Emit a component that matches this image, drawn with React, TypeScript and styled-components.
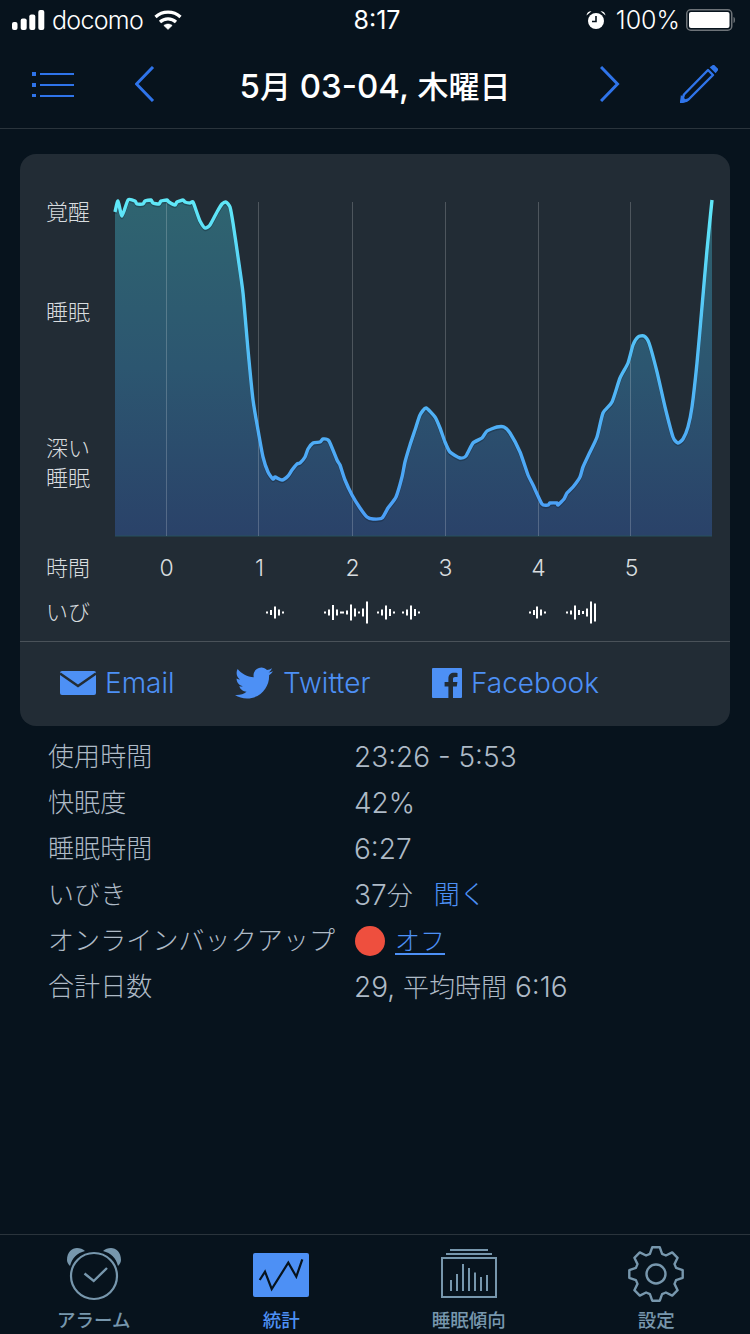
import React from "react";
import styled, { createGlobalStyle } from "styled-components";
import { FaTwitter } from "react-icons/fa";

const BLUE = "#4d90f5";
const NAV_BLUE = "#2f74ea";
const FONT = `Inter, "Noto Sans CJK JP", sans-serif`;

const GlobalStyle = createGlobalStyle`
  html, body {
    margin: 0;
    padding: 0;
    background: #07131d;
  }
  * {
    box-sizing: border-box;
  }
`;

const Page = styled.div`
  display: flex;
  flex-direction: column;
  width: 750px;
  height: 1334px;
  overflow: hidden;
  background: #07131d;
  font-family: ${FONT};
`;

/* status bar */
const StatusBar = styled.div`
  display: flex;
  align-items: center;
  height: 40px;
  padding: 0 15px 0 12px;
  color: #fff;
  font-size: 25px;
  font-weight: 300;
`;

const Carrier = styled.span`
  margin-left: 7px;
  margin-right: 11px;
  letter-spacing: -0.7px;
`;

const Clock = styled.span`
  position: absolute;
  left: 0;
  width: 754px;
  text-align: center;
  font-weight: 400;
`;

const StatusRight = styled.div`
  display: flex;
  align-items: center;
  margin-left: auto;
`;

const BatteryText = styled.span`
  margin: 0 6px 0 10px;
`;

/* header */
const Header = styled.header`
  display: flex;
  align-items: center;
  height: 89px;
  padding: 0 32px;
  border-bottom: 1px solid #2a343c;
`;

const Title = styled.h1`
  flex: 1;
  margin: 0 5px 0 0;
  text-align: center;
  color: #fff;
  font-size: 33px;
  font-weight: 450;
  white-space: nowrap;
`;

const TitleCjk = styled.span`
  font-size: 31px;
`;

const NavIcon = styled.svg<{ $left?: number; $right?: number }>`
  flex: none;
  display: block;
  margin-left: ${({ $left }) => $left ?? 0}px;
  margin-right: ${({ $right }) => $right ?? 0}px;
  color: ${NAV_BLUE};
`;

/* card */
const Card = styled.section`
  margin: 25px 20px 0;
  padding-top: 42px;
  height: 572px;
  background: #222c35;
  border-radius: 16px;
  color: #d8dcdf;
  font-size: 22px;
  font-weight: 300;
`;

const ChartRow = styled.div`
  display: flex;
  height: 346px;
`;

const YAxis = styled.div`
  flex: none;
  width: 90px;
  padding-left: 26px;
`;

const YLabel = styled.div<{ $top: number }>`
  margin-top: ${({ $top }) => $top}px;
  line-height: 30px;
`;

const ChartSvg = styled.svg`
  display: block;
  overflow: visible;
`;

const AxisRow = styled.div<{ $top: number }>`
  display: flex;
  align-items: center;
  height: 30px;
  margin-top: ${({ $top }) => $top}px;
  padding-left: 26px;
  line-height: 30px;
`;

const AxisName = styled.div<{ $width: number }>`
  flex: none;
  width: ${({ $width }) => $width}px;
`;

const Tick = styled.div`
  flex: none;
  width: 93px;
  text-align: center;
  font-size: 23px;
`;

const SnoreSvg = styled.svg`
  display: block;
  flex: none;
`;

const ShareRow = styled.div`
  display: flex;
  align-items: center;
  height: 85px;
  margin-top: 14px;
  padding: 0 0 3px 40px;
  border-top: 1px solid #4a5259;
`;

const ShareLink = styled.a<{ $width: number }>`
  display: flex;
  align-items: center;
  flex: none;
  width: ${({ $width }) => $width}px;
  color: ${BLUE};
  font-size: 28px;
  font-weight: 300;
`;

const ShareIcon = styled.svg<{ $gap: number }>`
  flex: none;
  display: block;
  margin-right: ${({ $gap }) => $gap}px;
`;

const TwitterIcon = styled(FaTwitter)`
  flex: none;
  width: 38px;
  height: 38px;
  margin-right: 10px;
`;

/* details */
const InfoList = styled.div`
  padding: 8px 0 0 48px;
  color: #aebac6;
  font-weight: 350;
`;

const InfoRow = styled.div`
  display: flex;
  align-items: center;
  height: 46px;
  line-height: 46px;
`;

const InfoLabel = styled.div`
  flex: none;
  width: 306px;
  font-size: 26px;
  font-weight: 300;
  letter-spacing: 0.1px;
  white-space: nowrap;
`;

const InfoValue = styled.div`
  display: flex;
  align-items: center;
  font-size: 28px;
  white-space: nowrap;
`;

const Cjk = styled.span`
  font-size: 26px;
  font-weight: 300;
`;

const ListenLink = styled.a`
  margin-left: 21px;
  color: ${BLUE};
  font-size: 26px;
  font-weight: 300;
`;

const OffDot = styled.span`
  width: 30px;
  height: 30px;
  margin: 0 10px 0 1px;
  border-radius: 50%;
  background: #ee4f3e;
`;

const OffLink = styled.a`
  color: ${BLUE};
  font-size: 25px;
  font-weight: 300;
  text-decoration: underline;
  text-underline-offset: 3px;
`;

/* tab bar */
const TabBar = styled.nav`
  display: grid;
  grid-template-columns: repeat(4, 1fr);
  height: 100px;
  margin-top: auto;
  border-top: 1px solid #2a343c;
`;

const Tab = styled.div<{ $active?: boolean }>`
  display: flex;
  flex-direction: column;
  align-items: center;
  color: ${({ $active }) => ($active ? BLUE : "#7797ad")};
  font-size: 18.5px;
  font-weight: 500;
`;

const TabIcon = styled.svg`
  display: block;
  margin-top: 9px;
`;

const TabLabel = styled.div`
  margin-top: 1px;
  line-height: 30px;
`;

const curve: [number, number][] = [
  [115, 212], [118, 201], [122, 216], [128, 200], [135, 201], [137, 204], [143, 204], [145, 201],
  [151, 200], [153, 203], [159, 204], [161, 201], [167, 200], [169, 202], [175, 205], [177, 202],
  [183, 200], [185, 202], [190, 203], [193, 202], [197, 213], [200, 221], [205, 228], [210, 225],
  [217, 212], [222, 204], [226, 202], [230, 207], [233, 223], [238, 257], [243, 293], [248, 350],
  [253, 400], [258, 430], [263, 457], [268, 472], [273, 479], [275, 477], [282, 480], [288, 476],
  [292, 470], [297, 464], [300, 463], [305, 457], [308, 449], [313, 443], [320, 442], [323, 439],
  [329, 441], [337, 460], [340, 465], [345, 480], [352, 495], [360, 508], [367, 517], [373, 519],
  [382, 518], [388, 508], [396, 497], [402, 477], [405, 462], [410, 445], [415, 430], [420, 415],
  [426, 408], [435, 417], [440, 428], [445, 442], [450, 452], [460, 458], [466, 456], [473, 443],
  [482, 438], [487, 431], [497, 427], [504, 427], [510, 433], [520, 452], [528, 475], [533, 485],
  [542, 504], [548, 505], [550, 503], [557, 503], [558, 505], [564, 499], [567, 493], [573, 487],
  [580, 477], [583, 467], [590, 452], [597, 437], [603, 413], [612, 402], [620, 378], [628, 363],
  [633, 345], [638, 337], [644, 336], [649, 343], [657, 372], [665, 407], [673, 437], [678, 443],
  [683, 439], [688, 427], [692, 407], [697, 363], [702, 307], [707, 250], [712, 200],
];

// catmull-rom through the sampled points, low tension so the flat top stays flat
const smooth = (pts: [number, number][]) => {
  let d = `M${pts[0][0]} ${pts[0][1]}`;
  for (let i = 0; i < pts.length - 1; i++) {
    const p0 = pts[Math.max(i - 1, 0)];
    const p1 = pts[i];
    const p2 = pts[i + 1];
    const p3 = pts[Math.min(i + 2, pts.length - 1)];
    const c1x = p1[0] + (p2[0] - p0[0]) / 10;
    const c1y = p1[1] + (p2[1] - p0[1]) / 10;
    const c2x = p2[0] - (p3[0] - p1[0]) / 10;
    const c2y = p2[1] - (p3[1] - p1[1]) / 10;
    d += `C${c1x.toFixed(1)} ${c1y.toFixed(1)} ${c2x.toFixed(1)} ${c2y.toFixed(1)} ${p2[0]} ${p2[1]}`;
  }
  return d;
};

const linePath = smooth(curve);
const gridLines = [166, 258, 352, 445, 538, 630];

// x, height of each snore bar, in page x
const snoreBars: [number, number][] = [
  [267, 2], [271, 5], [275, 12], [279, 6], [283, 2],
  [325, 2], [329, 6], [333, 15], [337, 6], [341, 2], [343, 2], [347, 4], [351, 16], [355, 8], [359, 2], [363, 8], [367, 22],
  [378, 2], [382, 6], [386, 14], [390, 7], [394, 2],
  [403, 2], [407, 6], [411, 14], [415, 7], [419, 2],
  [530, 2], [534, 5], [537, 12], [541, 6], [545, 2],
  [567, 2], [571, 4], [575, 14], [579, 5], [583, 3], [587, 8], [591, 22], [595, 18],
];

const gearPath = () => {
  const cx = 30;
  const cy = 30;
  const parts: string[] = [];
  for (let i = 0; i < 8; i++) {
    const a = -90 + i * 45;
    const pts = [
      [21, a - 17],
      [27, a - 8],
      [27, a + 8],
      [21, a + 17],
    ];
    pts.forEach(([r, deg]) => {
      const rad = (deg * Math.PI) / 180;
      parts.push(`${(cx + r * Math.cos(rad)).toFixed(1)} ${(cy + r * Math.sin(rad)).toFixed(1)}`);
    });
  }
  return `M${parts.join("L")}Z`;
};

const SleepChart = () => (
  <ChartSvg width={610} height={346} viewBox="110 196 610 346">
    <defs>
      <linearGradient id="area" gradientUnits="userSpaceOnUse" x1="0" y1="200" x2="0" y2="536">
        <stop offset="0" stopColor="#2f6470" />
        <stop offset="0.5" stopColor="#2c5670" />
        <stop offset="1" stopColor="#2a4269" />
      </linearGradient>
      <linearGradient id="stroke" gradientUnits="userSpaceOnUse" x1="0" y1="200" x2="0" y2="536">
        <stop offset="0" stopColor="#5fe8f8" />
        <stop offset="0.45" stopColor="#52bdf6" />
        <stop offset="1" stopColor="#4a9bf6" />
      </linearGradient>
    </defs>
    <path d={`${linePath}L712 536L115 536Z`} fill="url(#area)" />
    <line x1="115" y1="536" x2="712" y2="536" stroke="#26505f" />
    {gridLines.map((x) => (
      <line key={x} x1={x + 0.5} y1="202" x2={x + 0.5} y2="536" stroke="#fff" strokeOpacity="0.2" />
    ))}
    <path d={linePath} fill="none" stroke="#0d1a24" strokeOpacity="0.3" strokeWidth="3.4" transform="translate(0 1.5)" />
    <path d={linePath} fill="none" stroke="url(#stroke)" strokeWidth="3.4" strokeLinejoin="round" />
  </ChartSvg>
);

const App = () => (
  <Page>
    <GlobalStyle />
    <StatusBar>
      <svg width="33" height="20" viewBox="0 0 33 20" fill="#fff">
        <rect x="0" y="12" width="5.5" height="8" rx="2" />
        <rect x="8.7" y="8.5" width="6" height="11.5" rx="2" />
        <rect x="17.3" y="4.5" width="6" height="15.5" rx="2" />
        <rect x="26.3" y="0" width="6" height="20" rx="2" />
      </svg>
      <Carrier>docomo</Carrier>
      <svg width="28" height="20" viewBox="0 0 28 20" fill="none" stroke="#fff" strokeWidth="3.2">
        <path d="M1.5 7C8.5 0.5 19.5 0.5 26.5 7" />
        <path d="M6 12C10.5 7.8 17.5 7.8 22 12" />
        <path d="M14 19.5L9.8 15.5C12.2 13.5 15.8 13.5 18.2 15.5Z" fill="#fff" strokeWidth="0.5" />
      </svg>
      <Clock>8:17</Clock>
      <StatusRight>
        <svg width="20" height="20" viewBox="0 0 20 20" fill="#fff">
          <circle cx="10" cy="11" r="8" />
          <path d="M10 6v5.5H6" fill="none" stroke="#07131d" strokeWidth="1.6" />
          <path d="M0.5 5.5C0.8 2.5 3 1 5.5 1.2ZM19.5 5.5C19.2 2.5 17 1 14.5 1.2Z" />
        </svg>
        <BatteryText>100%</BatteryText>
        <svg width="49" height="22" viewBox="0 0 49 22">
          <rect x="0.75" y="0.75" width="45" height="20.5" rx="4" fill="none" stroke="#6d7378" strokeWidth="1.5" />
          <rect x="3" y="3" width="40.5" height="16" rx="2" fill="#fff" />
          <path d="M47.5 8c1 .2 1.5 1.2 1.5 3s-.5 2.8-1.5 3z" fill="#6d7378" />
        </svg>
      </StatusRight>
    </StatusBar>

    <Header>
      <NavIcon width="42" height="26" viewBox="0 0 42 26" fill="currentColor" $right={61}>
        <rect x="0" y="1" width="4" height="4" />
        <rect x="0" y="12" width="4" height="4" />
        <rect x="0" y="23" width="4" height="4" />
        <rect x="8" y="2" width="34" height="2" />
        <rect x="8" y="13" width="34" height="2" />
        <rect x="8" y="24" width="34" height="2" />
      </NavIcon>
      <NavIcon width="20" height="36" viewBox="0 0 20 36" fill="none" stroke="currentColor" strokeWidth="3">
        <path d="M18 1L1.5 18L18 35" />
      </NavIcon>
      <Title>
        5<TitleCjk>月</TitleCjk> 03-04, <TitleCjk>木曜日</TitleCjk>
      </Title>
      <NavIcon width="20" height="36" viewBox="0 0 20 36" fill="none" stroke="currentColor" strokeWidth="3">
        <path d="M1 1L17.5 18L1 35" />
      </NavIcon>
      <NavIcon width="38" height="38" viewBox="0 0 38 38" fill="none" stroke="currentColor" strokeWidth="2.4" $left={60}>
        <path d="M28 5L33 10L8.5 34.5L1.5 37L4 29.5Z" strokeLinejoin="round" />
        <path d="M1.2 37L1.8 32.5L5.5 36Z" fill="currentColor" />
        <path d="M31.5 2.5L33.5 1L37 4.5L35.5 6.5Z" fill="currentColor" />
      </NavIcon>
    </Header>

    <Card>
      <ChartRow>
        <YAxis>
          <YLabel $top={1}>覚醒</YLabel>
          <YLabel $top={70}>睡眠</YLabel>
          <YLabel $top={106}>
            深い
            <br />
            睡眠
          </YLabel>
        </YAxis>
        <SleepChart />
      </ChartRow>
      <AxisRow $top={11}>
        <AxisName $width={74}>時間</AxisName>
        {[0, 1, 2, 3, 4, 5].map((t) => (
          <Tick key={t}>{t}</Tick>
        ))}
      </AxisRow>
      <AxisRow $top={14}>
        <AxisName $width={64}>いび</AxisName>
        <SnoreSvg width="510" height="30" viewBox="110 597 510 30">
          {snoreBars.map(([x, h]) => (
            <rect key={x} x={x - 1} y={612.5 - h / 2} width="2" height={h} fill="#fff" />
          ))}
        </SnoreSvg>
      </AxisRow>
      <ShareRow>
        <ShareLink $width={175}>
          <ShareIcon width="36" height="24" viewBox="0 0 36 24" $gap={9}>
            <rect width="36" height="24" rx="2" fill={BLUE} />
            <path d="M0 2.5L18 15L36 2.5" fill="none" stroke="#222c35" strokeWidth="2.6" />
          </ShareIcon>
          Email
        </ShareLink>
        <ShareLink $width={197}>
          <TwitterIcon />
          Twitter
        </ShareLink>
        <ShareLink $width={180}>
          <ShareIcon width="30" height="30" viewBox="0 0 30 30" fill={BLUE} $gap={9}>
            <path d="M1 0H29a1 1 0 0 1 1 1V29a1 1 0 0 1-1 1H21V18.6h3.8l.6-4.5H21v-2.9c0-1.3.4-2.2 2.2-2.2h2.3v-4c-.4 0-1.8-.2-3.4-.2-3.4 0-5.7 2-5.7 5.9v3.4h-3.8v4.5h3.8V30H1a1 1 0 0 1-1-1V1a1 1 0 0 1 1-1z" />
          </ShareIcon>
          Facebook
        </ShareLink>
      </ShareRow>
    </Card>

    <InfoList>
      <InfoRow>
        <InfoLabel>使用時間</InfoLabel>
        <InfoValue>23:26 - 5:53</InfoValue>
      </InfoRow>
      <InfoRow>
        <InfoLabel>快眠度</InfoLabel>
        <InfoValue>42%</InfoValue>
      </InfoRow>
      <InfoRow>
        <InfoLabel>睡眠時間</InfoLabel>
        <InfoValue>6:27</InfoValue>
      </InfoRow>
      <InfoRow>
        <InfoLabel>いびき</InfoLabel>
        <InfoValue>
          <span>
            37<Cjk>分</Cjk>
          </span>
          <ListenLink>聞く</ListenLink>
        </InfoValue>
      </InfoRow>
      <InfoRow>
        <InfoLabel>オンラインバックアップ</InfoLabel>
        <InfoValue>
          <OffDot />
          <OffLink>オフ</OffLink>
        </InfoValue>
      </InfoRow>
      <InfoRow>
        <InfoLabel>合計日数</InfoLabel>
        <InfoValue>
          <span>
            29, <Cjk>平均時間</Cjk> 6:16
          </span>
        </InfoValue>
      </InfoRow>
    </InfoList>

    <TabBar>
      <Tab>
        <TabIcon width="64" height="60" viewBox="0 0 64 60">
          <circle cx="32" cy="32" r="23" fill="none" stroke="currentColor" strokeWidth="2.2" />
          <path d="M5 16C5 8 10 4 15 4C18 4 21 5 23 7C15 9 10 14 8 22C6 20 5 18 5 16Z" fill="currentColor" />
          <path d="M59 16C59 8 54 4 49 4C46 4 43 5 41 7C49 9 54 14 56 22C58 20 59 18 59 16Z" fill="currentColor" />
          <path d="M22.5 29.5L31.7 37L45 24" fill="none" stroke="currentColor" strokeWidth="2.4" />
        </TabIcon>
        <TabLabel>アラーム</TabLabel>
      </Tab>
      <Tab $active>
        <TabIcon width="56" height="60" viewBox="0 1 56 60">
          <rect x="0" y="10" width="56" height="44" rx="2" fill="currentColor" />
          <path d="M6.7 37L12 28.7L18.7 46L35.3 19.7L43.3 33.7L49.3 16.3" fill="none" stroke="#07131d" strokeWidth="2.2" />
        </TabIcon>
        <TabLabel>統計</TabLabel>
      </Tab>
      <Tab>
        <TabIcon width="56" height="60" viewBox="0 1 56 60" fill="none" stroke="currentColor" strokeWidth="2">
          <path d="M9 7H47M5 11H51" />
          <rect x="1" y="15" width="54" height="39" />
          <path d="M10 48V37M16 48V31M22 48V21M28 48V25M34 48V29.5M40 48V34M46 48V32" />
        </TabIcon>
        <TabLabel>睡眠傾向</TabLabel>
      </Tab>
      <Tab>
        <TabIcon width="60" height="60" viewBox="0 0 60 60" fill="none" stroke="currentColor" strokeWidth="2.4">
          <path d={gearPath()} strokeLinejoin="round" />
          <circle cx="30" cy="30" r="9.5" />
        </TabIcon>
        <TabLabel>設定</TabLabel>
      </Tab>
    </TabBar>
  </Page>
);

export default App;
